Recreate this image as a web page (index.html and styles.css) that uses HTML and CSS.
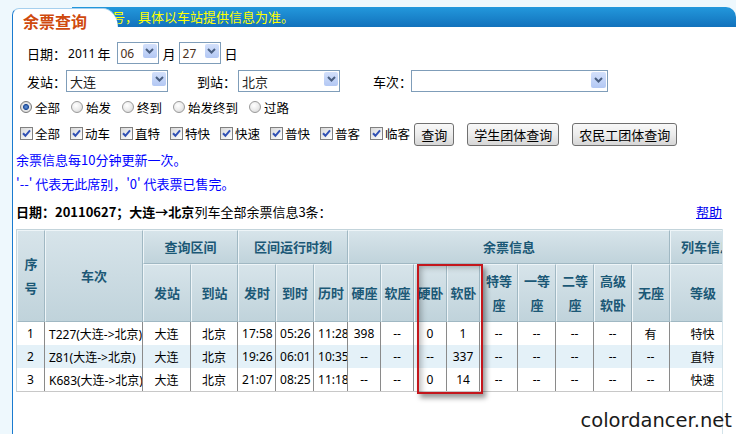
FILE: index.html
```html
<!DOCTYPE html>
<html lang="zh-CN">
<head>
<meta charset="utf-8">
<title>余票查询</title>
<link rel="stylesheet" href="styles.css">
</head>
<body>
<div class="page">
  <div class="head">
    <div class="tab">余票查询</div>
    <div class="bar"><span class="marquee">号，具体以车站提供信息为准。</span></div>
  </div>
  <div class="panel">
    <div class="row r-date">
      <span class="lbl">日期：</span>
      <span class="num">2011</span>
      <span class="unit u-year">年</span>
      <span class="sel s-small"><span class="val">06</span><span class="dd"><svg width="9" height="6" viewBox="0 0 9 6"><path d="M1 1l3.5 3.5L8 1" fill="none" stroke="#4a5f82" stroke-width="2"/></svg></span></span>
      <span class="unit">月</span>
      <span class="sel s-small"><span class="val">27</span><span class="dd"><svg width="9" height="6" viewBox="0 0 9 6"><path d="M1 1l3.5 3.5L8 1" fill="none" stroke="#4a5f82" stroke-width="2"/></svg></span></span>
      <span class="unit">日</span>
    </div>
    <div class="row r-station">
      <span class="lbl">发站：</span>
      <span class="sel s-st"><span class="val">大连</span><span class="dd"><svg width="9" height="6" viewBox="0 0 9 6"><path d="M1 1l3.5 3.5L8 1" fill="none" stroke="#4a5f82" stroke-width="2"/></svg></span></span>
      <span class="lbl l-to">到站：</span>
      <span class="sel s-st"><span class="val">北京</span><span class="dd"><svg width="9" height="6" viewBox="0 0 9 6"><path d="M1 1l3.5 3.5L8 1" fill="none" stroke="#4a5f82" stroke-width="2"/></svg></span></span>
      <span class="lbl l-train">车次：</span>
      <span class="sel s-train"><span class="val"></span><span class="dd"><svg width="9" height="6" viewBox="0 0 9 6"><path d="M1 1l3.5 3.5L8 1" fill="none" stroke="#4a5f82" stroke-width="2"/></svg></span></span>
    </div>
    <div class="row r-radio">
      <span class="opt"><span class="radio on"></span>全部</span>
      <span class="opt"><span class="radio"></span>始发</span>
      <span class="opt"><span class="radio"></span>终到</span>
      <span class="opt"><span class="radio"></span>始发终到</span>
      <span class="opt"><span class="radio"></span>过路</span>
    </div>
    <div class="row r-check">
      <span class="chk"><span class="cb"><svg width="11" height="11" viewBox="0 0 11 11"><path d="M2 5.2l2.4 2.6L9 2.4" fill="none" stroke="#3050b4" stroke-width="2"/></svg></span>全部</span>
      <span class="chk"><span class="cb"><svg width="11" height="11" viewBox="0 0 11 11"><path d="M2 5.2l2.4 2.6L9 2.4" fill="none" stroke="#3050b4" stroke-width="2"/></svg></span>动车</span>
      <span class="chk"><span class="cb"><svg width="11" height="11" viewBox="0 0 11 11"><path d="M2 5.2l2.4 2.6L9 2.4" fill="none" stroke="#3050b4" stroke-width="2"/></svg></span>直特</span>
      <span class="chk"><span class="cb"><svg width="11" height="11" viewBox="0 0 11 11"><path d="M2 5.2l2.4 2.6L9 2.4" fill="none" stroke="#3050b4" stroke-width="2"/></svg></span>特快</span>
      <span class="chk"><span class="cb"><svg width="11" height="11" viewBox="0 0 11 11"><path d="M2 5.2l2.4 2.6L9 2.4" fill="none" stroke="#3050b4" stroke-width="2"/></svg></span>快速</span>
      <span class="chk"><span class="cb"><svg width="11" height="11" viewBox="0 0 11 11"><path d="M2 5.2l2.4 2.6L9 2.4" fill="none" stroke="#3050b4" stroke-width="2"/></svg></span>普快</span>
      <span class="chk"><span class="cb"><svg width="11" height="11" viewBox="0 0 11 11"><path d="M2 5.2l2.4 2.6L9 2.4" fill="none" stroke="#3050b4" stroke-width="2"/></svg></span>普客</span>
      <span class="chk last"><span class="cb"><svg width="11" height="11" viewBox="0 0 11 11"><path d="M2 5.2l2.4 2.6L9 2.4" fill="none" stroke="#3050b4" stroke-width="2"/></svg></span>临客</span>
      <span class="btn b-first">查询</span>
      <span class="btn">学生团体查询</span>
      <span class="btn">农民工团体查询</span>
    </div>
    <div class="row note n1">余票信息每10分钟更新一次。</div>
    <div class="row note n2">'--' 代表无此席别，'0' 代表票已售完。</div>
    <div class="row title">
      <span><b>日期：20110627；大连→北京</b>列车全部余票信息3条：</span>
      <a class="help" href="#">帮助</a>
    </div>
    <div class="tblwrap">
      <table class="tkt">
        <colgroup>
          <col class="c-seq"><col class="c-train"><col class="c-st1"><col class="c-st2">
          <col class="c-t"><col class="c-t"><col class="c-dur">
          <col class="c-s"><col class="c-s"><col class="c-s"><col class="c-s">
          <col class="c-m"><col class="c-m"><col class="c-m"><col class="c-m"><col class="c-m">
          <col class="c-grade">
        </colgroup>
        <thead>
          <tr class="h1">
            <th rowspan="2" class="seq">序号</th>
            <th rowspan="2">车次</th>
            <th colspan="2">查询区间</th>
            <th colspan="3">区间运行时刻</th>
            <th colspan="9">余票信息</th>
            <th class="info">列车信息</th>
          </tr>
          <tr class="h2">
            <th>发站</th><th>到站</th><th>发时</th><th>到时</th><th>历时</th>
            <th>硬座</th><th>软座</th><th>硬卧</th><th>软卧</th>
            <th>特等座</th><th>一等座</th><th>二等座</th><th>高级软卧</th><th>无座</th>
            <th>等级</th>
          </tr>
        </thead>
        <tbody>
          <tr>
            <td>1</td><td class="l">T227(大连-&gt;北京)</td><td>大连</td><td>北京</td>
            <td class="l">17:58</td><td class="l">05:26</td><td class="l">11:28</td>
            <td>398</td><td>--</td><td>0</td><td>1</td>
            <td>--</td><td>--</td><td>--</td><td>--</td><td>有</td><td>特快</td>
          </tr>
          <tr class="alt">
            <td>2</td><td class="l">Z81(大连-&gt;北京)</td><td>大连</td><td>北京</td>
            <td class="l">19:26</td><td class="l">06:01</td><td class="l">10:35</td>
            <td>--</td><td>--</td><td>--</td><td>337</td>
            <td>--</td><td>--</td><td>--</td><td>--</td><td>--</td><td>直特</td>
          </tr>
          <tr>
            <td>3</td><td class="l">K683(大连-&gt;北京)</td><td>大连</td><td>北京</td>
            <td class="l">21:07</td><td class="l">08:25</td><td class="l">11:18</td>
            <td>--</td><td>--</td><td>0</td><td>14</td>
            <td>--</td><td>--</td><td>--</td><td>--</td><td>--</td><td>快速</td>
          </tr>
        </tbody>
      </table>
      <div class="mark"></div>
    </div>
  </div>
  <div class="wm">colordancer.net</div>
</div>
</body>
</html>
```
FILE: styles.css
```css
html, body {
  margin: 0;
  padding: 0;
}
body {
  background: #eef8fd;
  font-family: "Noto Sans CJK SC", "Noto Sans", sans-serif;
  font-size: 13px;
  color: #000;
}
.page {
  position: relative;
  width: 736px;
  height: 434px;
  overflow: hidden;
  padding: 7px 0 0 12px;
  box-sizing: border-box;
  display: flex;
  flex-direction: column;
}
.head {
  display: flex;
  align-items: flex-start;
  height: 20px;
  flex: none;
  background: linear-gradient(#2398dc, #1272bc) no-repeat 60px 0 / calc(100% - 60px) 100%;
  border-top-right-radius: 10px;
}
.tab {
  position: relative;
  z-index: 1;
  flex: none;
  width: 106px;
  height: 27px;
  margin-top: 1px;
  box-sizing: border-box;
  background: #fff;
  border-left: 1px solid #1a7bd0;
  border-top: 1px solid #a6d0ee;
  border-radius: 7px 15px 0 0 / 7px 20px 0 0;
  padding-left: 10px;
  color: #cf4a0e;
  font-weight: bold;
  font-size: 16px;
  line-height: 25px;
}
.bar {
  flex: 1;
  margin-left: -6px;
  overflow: hidden;
  white-space: nowrap;
  height: 20px;
}
.marquee {
  color: #ffff00;
  font-size: 13px;
  line-height: 20px;
}
.panel {
  flex: 1;
  min-height: 0;
  background: #fff;
  border-left: 1px solid #1a7bd0;
  padding: 0 14px 0 3px;
  display: flex;
  flex-direction: column;
}
.row {
  display: flex;
  align-items: center;
  flex: none;
  white-space: nowrap;
}
.r-date {
  margin-top: 15px;
  height: 22px;
  padding-left: 11px;
}
.num {
  font-family: "Noto Sans", sans-serif;
  font-size: 12px;
  margin-left: 2px;
}
.unit { margin-left: 4px; }
.u-year { margin-left: 2px; margin-right: 3px; }
.sel {
  display: inline-flex;
  align-items: flex-start;
  height: 22px;
  box-sizing: border-box;
  border: 1px solid #7f9db9;
  background: #fff;
}
.sel + .unit { margin-left: 4px; }
.unit + .sel { margin-left: 3px; }
.s-small { width: 42px; }
.s-st { width: 102px; }
.s-train { width: 197px; }
.val {
  flex: 1;
  padding: 2px 0 0 3px;
  line-height: 18px;
  font-size: 13px;
  color: #222;
}
.s-small .val {
  font-family: "Noto Sans", sans-serif;
  font-size: 12px;
  color: #4a3020;
}
.dd {
  flex: none;
  width: 14px;
  height: 14px;
  margin: 1px;
  border-radius: 2px;
  background: linear-gradient(#d3e0fb, #b3c8f4);
  display: flex;
  align-items: center;
  justify-content: center;
}
.s-train .dd { width: 15px; height: 16px; }
.r-station {
  margin-top: 6px;
  height: 22px;
  padding-left: 11px;
}
.l-to { margin-left: 29px; margin-right: 2px; }
.l-train { margin-left: 33px; margin-right: -1px; }
.r-radio {
  margin-top: 6px;
  height: 18px;
  padding-left: 4px;
  font-size: 12.5px;
}
.opt {
  display: inline-flex;
  align-items: center;
  margin-right: 11px;
}
.radio {
  width: 12px;
  height: 12px;
  box-sizing: border-box;
  border: 1px solid #9a9a9a;
  border-radius: 50%;
  margin-right: 3px;
  background: radial-gradient(circle at 40% 35%, #ffffff 0, #ececec 50%, #cfcfcf 100%);
}
.radio.on {
  border-color: #7a7a7a;
  background: radial-gradient(circle at 50% 50%, #6a9ae0 0, #1f4c98 2.6px, #e9e9e9 3.4px, #cccccc 100%);
}
.r-check {
  margin-top: 7px;
  height: 23px;
  padding-left: 4px;
  font-size: 12.5px;
}
.chk {
  display: inline-flex;
  align-items: center;
  margin-right: 10px;
  position: relative;
  top: -1px;
}
.chk.last { margin-right: 0; }
.cb {
  width: 13px;
  height: 13px;
  box-sizing: border-box;
  border: 1px solid #808080;
  margin-right: 2px;
  background: linear-gradient(135deg, #d8d8d8, #ffffff);
  display: flex;
  align-items: center;
  justify-content: center;
}
.btn {
  display: inline-flex;
  align-items: center;
  height: 23px;
  box-sizing: border-box;
  padding: 0 6px;
  border: 1px solid #707070;
  border-radius: 3px;
  background: linear-gradient(#f8f8f8, #ececec 50%, #d6d6d6);
  font-size: 13px;
  margin-left: 13px;
}
.btn.b-first { margin-left: 4px; }
.note {
  color: #0000ff;
  height: 18px;
  line-height: 18px;
}
.n1 { margin-top: 5px; }
.n2 { margin-top: 6px; }
.title {
  margin-top: 9px;
  height: 18px;
  justify-content: space-between;
}
.title b { font-weight: bold; }
.help {
  color: #0000ee;
  text-decoration: underline;
}
.tblwrap {
  position: relative;
  margin-top: 9px;
  flex: 1;
  min-height: 0;
  overflow: hidden;
  border-right: 1px solid #d3e3ea;
  margin-right: -1px;
}
.tkt {
  table-layout: fixed;
  width: 720px;
  border-collapse: separate;
  border-spacing: 0;
  border-top: 1px solid #c3d4db;
  border-left: 1px solid #c3d4db;
  border-bottom: 1px solid #c8c8c8;
}
.c-seq { width: 28px; }
.c-train { width: 98px; }
.c-st1 { width: 48px; }
.c-st2 { width: 47px; }
.c-t { width: 38px; }
.c-dur { width: 34px; }
.c-s { width: 33px; }
.c-m { width: 38px; }
.c-grade { width: 66px; }
.tkt th {
  padding: 0;
  background: linear-gradient(#d7e4ea, #c0d3db);
  color: #1b5876;
  font-weight: bold;
  font-size: 13px;
  line-height: 24px;
  border-top: 1px solid #eef5f8;
  border-left: 1px solid #eef5f8;
  border-right: 1px solid #a0b8c3;
  border-bottom: 1px solid #a0b8c3;
  white-space: normal;
  overflow: hidden;
}
.tkt th.info { white-space: nowrap; padding-left: 10px; text-align: left; }
.tkt .h1 { height: 34px; }
.tkt .h2 { height: 58px; }
.tkt th.seq { padding: 0 2px; }
.tkt td {
  padding: 0;
  height: 23px;
  font-family: "Noto Sans", "Noto Sans CJK SC", sans-serif;
  font-size: 12px;
  text-align: center;
  white-space: nowrap;
  overflow: hidden;
  border-right: 1px solid #8a8a8a;
}
.tkt td.l {
  text-align: left;
  padding-left: 4px;
}
.tkt tr.alt td { background: #e4f1f8; }
.mark {
  position: absolute;
  left: 401px;
  top: 35px;
  width: 66px;
  height: 130px;
  box-sizing: border-box;
  border: 2px solid #c4161c;
  box-shadow: 3px 4px 5px rgba(0, 0, 0, 0.4), inset 4px 3px 6px -2px rgba(0, 0, 0, 0.3);
}
.wm {
  position: absolute;
  right: 4px;
  bottom: 1px;
  font-family: "DejaVu Sans", sans-serif;
  font-size: 19.5px;
  color: #1a1a1a;
  line-height: 24px;
}
```
